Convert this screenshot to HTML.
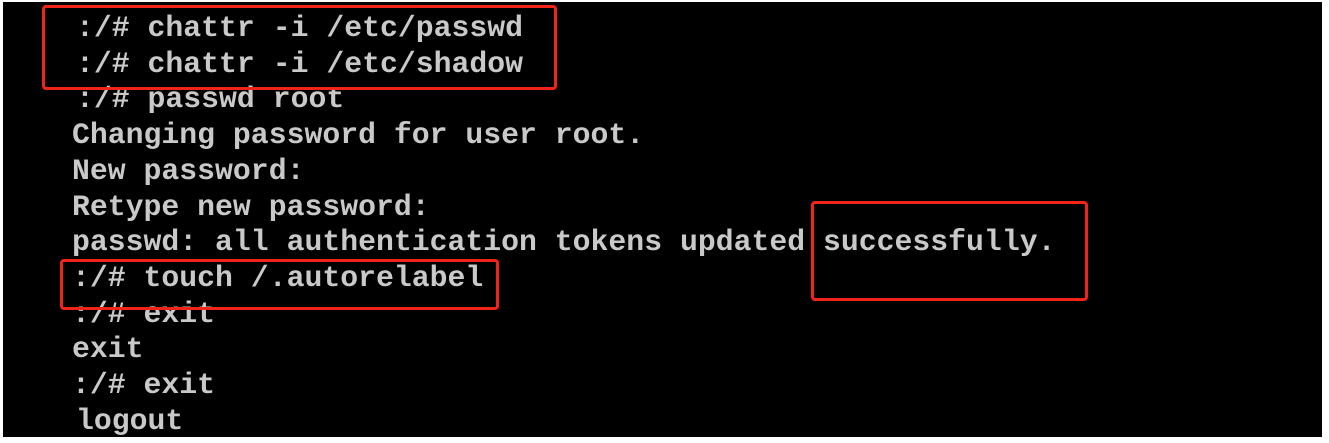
<!DOCTYPE html>
<html><head><style>
body{margin:0;width:1329px;height:443px;background:#fff;position:relative;overflow:hidden}
.term{position:absolute;left:3px;top:2px;width:1319px;height:435px;background:#000}
pre{position:absolute;left:72px;top:11px;margin:0;font-family:"Liberation Mono",monospace;font-size:29.8px;line-height:35.7px;color:#c9c9c9;font-weight:bold;letter-spacing:0;}
.i{padding-left:4px}
.b{position:absolute;border:3px solid #f02418;border-radius:4px;box-sizing:border-box}
</style></head><body>
<div class="term"></div>
<pre><span class="i">:/# chattr -i /etc/passwd</span>
<span class="i">:/# chattr -i /etc/shadow</span>
<span class="i">:/# passwd root</span>
Changing password for user root.
New password:
Retype new password:
passwd: all authentication tokens updated successfully.
:/# touch /.autorelabel
:/# exit
exit
:/# exit
<span class="i">logout</span></pre>
<div class="b" style="left:42px;top:5px;width:515px;height:85px"></div>
<div class="b" style="left:811px;top:201px;width:277px;height:100px"></div>
<div class="b" style="left:60px;top:259px;width:439px;height:51px"></div>
</body></html>
